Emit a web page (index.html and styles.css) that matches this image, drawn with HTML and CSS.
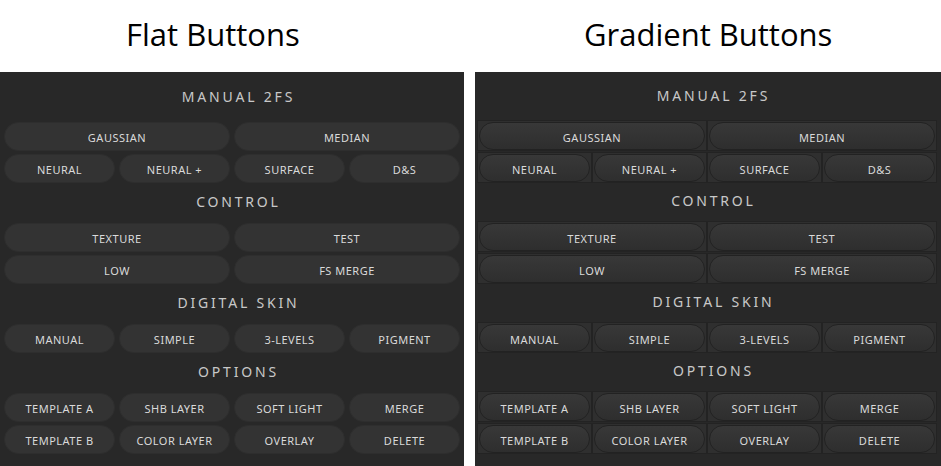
FILE: index.html
```html
<!DOCTYPE html>
<html>
<head>
<meta charset="utf-8">
<link rel="stylesheet" href="styles.css">
</head>
<body>
<div class="page">
  <div class="column column-flat">
    <h1 class="title title-flat">Flat Buttons</h1>
    <div class="panel panel-flat">
      <div class="section section-lead">
        <div class="heading">MANUAL 2FS</div>
        <div class="grid">
          <div class="btn wide">GAUSSIAN</div>
          <div class="btn wide">MEDIAN</div>
          <div class="btn">NEURAL</div>
          <div class="btn">NEURAL +</div>
          <div class="btn">SURFACE</div>
          <div class="btn">D&amp;S</div>
        </div>
      </div>
      <div class="section">
        <div class="heading">CONTROL</div>
        <div class="grid">
          <div class="btn wide">TEXTURE</div>
          <div class="btn wide">TEST</div>
          <div class="btn wide">LOW</div>
          <div class="btn wide">FS MERGE</div>
        </div>
      </div>
      <div class="section">
        <div class="heading">DIGITAL SKIN</div>
        <div class="grid">
          <div class="btn">MANUAL</div>
          <div class="btn">SIMPLE</div>
          <div class="btn">3-LEVELS</div>
          <div class="btn">PIGMENT</div>
        </div>
      </div>
      <div class="section">
        <div class="heading">OPTIONS</div>
        <div class="grid">
          <div class="btn">TEMPLATE A</div>
          <div class="btn">SHB LAYER</div>
          <div class="btn">SOFT LIGHT</div>
          <div class="btn">MERGE</div>
          <div class="btn">TEMPLATE B</div>
          <div class="btn">COLOR LAYER</div>
          <div class="btn">OVERLAY</div>
          <div class="btn">DELETE</div>
        </div>
      </div>
    </div>
  </div>
  <div class="column column-grad">
    <h1 class="title title-grad">Gradient Buttons</h1>
    <div class="panel panel-grad">
      <div class="section section-lead">
        <div class="heading">MANUAL 2FS</div>
        <div class="grid">
          <div class="cell wide"><div class="btn">GAUSSIAN</div></div>
          <div class="cell wide"><div class="btn">MEDIAN</div></div>
          <div class="cell"><div class="btn">NEURAL</div></div>
          <div class="cell"><div class="btn">NEURAL +</div></div>
          <div class="cell"><div class="btn">SURFACE</div></div>
          <div class="cell"><div class="btn">D&amp;S</div></div>
        </div>
      </div>
      <div class="section">
        <div class="heading">CONTROL</div>
        <div class="grid">
          <div class="cell wide"><div class="btn">TEXTURE</div></div>
          <div class="cell wide"><div class="btn">TEST</div></div>
          <div class="cell wide"><div class="btn">LOW</div></div>
          <div class="cell wide"><div class="btn">FS MERGE</div></div>
        </div>
      </div>
      <div class="section">
        <div class="heading">DIGITAL SKIN</div>
        <div class="grid">
          <div class="cell"><div class="btn">MANUAL</div></div>
          <div class="cell"><div class="btn">SIMPLE</div></div>
          <div class="cell"><div class="btn">3-LEVELS</div></div>
          <div class="cell"><div class="btn">PIGMENT</div></div>
        </div>
      </div>
      <div class="section">
        <div class="heading">OPTIONS</div>
        <div class="grid">
          <div class="cell"><div class="btn">TEMPLATE A</div></div>
          <div class="cell"><div class="btn">SHB LAYER</div></div>
          <div class="cell"><div class="btn">SOFT LIGHT</div></div>
          <div class="cell"><div class="btn">MERGE</div></div>
          <div class="cell"><div class="btn">TEMPLATE B</div></div>
          <div class="cell"><div class="btn">COLOR LAYER</div></div>
          <div class="cell"><div class="btn">OVERLAY</div></div>
          <div class="cell"><div class="btn">DELETE</div></div>
        </div>
      </div>
    </div>
  </div>
</div>
</body>
</html>
```

FILE: styles.css
```css
html, body {
  margin: 0;
  padding: 0;
  background: #ffffff;
}

.page {
  display: flex;
  gap: 11px;
  width: 941px;
  height: 466px;
  overflow: hidden;
}

.column {
  display: flex;
  flex-direction: column;
}

.column-flat { width: 464px; }
.column-grad { width: 466px; }

.title {
  margin: 0;
  height: 72px;
  box-sizing: border-box;
  padding-top: 14px;
  font-family: "Open Sans", "Liberation Sans", sans-serif;
  font-weight: 400;
  font-size: 31px;
  line-height: 40px;
  color: #000;
  letter-spacing: 0;
}

.title-flat { padding-left: 126px; }
.title-grad { padding-left: 109px; }

.panel {
  flex: 1;
  background: #282828;
  box-sizing: border-box;
  padding-top: 13px;
  font-family: "Noto Sans", "DejaVu Sans", sans-serif;
}

.panel-flat { padding-left: 4px; padding-right: 4px; }
.panel-grad { padding-left: 3px; padding-right: 5px; padding-top: 12px; }

.section { margin-top: 7px; }
.section-lead { margin-top: 0; }

.heading {
  height: 24px;
  line-height: 24px;
  text-align: center;
  font-size: 14px;
  letter-spacing: 2.8px;
  padding-left: 13px;
  color: #c8c8c8;
  margin-bottom: 9px;
}

.section-lead .heading { margin-bottom: 13px; }

.grid {
  display: grid;
  grid-template-columns: repeat(4, 1fr);
}

.panel-flat .grid { column-gap: 4px; row-gap: 3px; }
.panel-grad .grid { column-gap: 2px; row-gap: 3px; }

.wide { grid-column: span 2; }

.btn {
  height: 29px;
  box-sizing: border-box;
  border-radius: 15px;
  display: flex;
  align-items: center;
  justify-content: center;
  padding-top: 2px;
  font-size: 11px;
  letter-spacing: 0.5px;
  color: #dadada;
}

.panel-flat .btn {
  background: #333333;
  border: 1px solid #2e2e2e;
}

.cell {
  background: #2f2f2f;
  padding: 1px 1px 0 1px;
  box-shadow: 0 0 0 1px #232323;
}

.panel-grad .btn {
  height: 28px;
  background: linear-gradient(#383838, #2e2e2e);
  border: 1px solid #222222;
}
```
